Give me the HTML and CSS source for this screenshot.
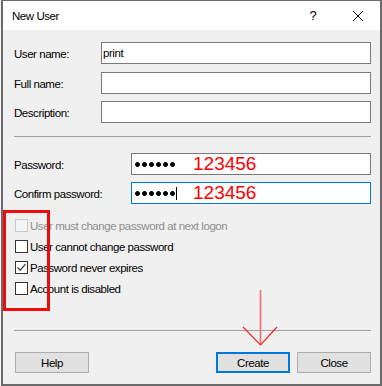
FILE: index.html
```
<!DOCTYPE html>
<html lang="en">
<head>
  <meta charset="UTF-8">
  <meta name="viewport" content="width=device-width, initial-scale=1.0">
  <title>New User</title>
  <link rel="stylesheet" href="styles.css">
</head>
<body>
  <div class="window">
    <div class="titlebar">
      <span class="title">New User</span>
      <span class="tb-btn help-btn">?</span>
      <span class="tb-btn close-btn">
        <svg width="10" height="10" viewBox="0 0 10 10"><path d="M0 0L10 10M10 0L0 10" stroke="#000" stroke-width="1"/></svg>
      </span>
    </div>

    <div class="content">
      <div class="form-grid names">
        <label>User name:</label>
        <div class="field">print</div>
        <label>Full name:</label>
        <div class="field"></div>
        <label>Description:</label>
        <div class="field"></div>
      </div>

      <div class="sep"></div>

      <div class="form-grid passwords">
        <label>Password:</label>
        <div class="field"><span class="dots"></span><span class="note">123456</span></div>
        <label>Confirm password:</label>
        <div class="field focused"><span class="dots"></span><span class="caret"></span><span class="note">123456</span></div>
      </div>

      <div class="checks">
        <div class="check disabled"><span class="box"></span>User must change password at next logon</div>
        <div class="check"><span class="box"></span>User cannot change password</div>
        <div class="check"><span class="box"><svg width="11" height="11" viewBox="0 0 11 11"><path d="M1.5 5.5L4.2 8.2L9.5 2.2" fill="none" stroke="#333" stroke-width="1.2"/></svg></span>Password never expires</div>
        <div class="check"><span class="box"></span>Account is disabled</div>
      </div>

      <div class="sep sep-bottom"></div>

      <div class="buttons">
        <button class="btn">Help</button>
        <div class="btn-group">
          <button class="btn default">Create</button>
          <button class="btn">Close</button>
        </div>
      </div>
    </div>

    <!-- annotations drawn over the dialog -->
    <div class="mark-box"></div>
    <svg class="mark-arrow" width="36" height="58" viewBox="0 0 36 58">
      <path d="M18.5 1V56" stroke="#f07070" stroke-width="1.6"/>
      <path d="M1 38L18.5 56L35 38" fill="none" stroke="#ff2020" stroke-width="1.2"/>
    </svg>
  </div>
</body>
</html>
```

FILE: styles.css
```
body {
  margin: 0;
  background-color: #f4f4f4;
  font-family: "Liberation Sans", Arial, sans-serif;
  font-size: 11.5px;
  letter-spacing: -0.45px;
  color: #000;
}

.window {
  position: relative;
  margin-left: 1px;
  width: 381px;
  height: 386px;
  box-sizing: border-box;
  border: 2px solid #6b6b6b;
  border-top-width: 1px;
  background-color: #f0f0f0;
}

.titlebar {
  display: flex;
  align-items: center;
  height: 29px;
  padding-left: 9px;
  background-color: #fff;
}

.title {
  flex: 1;
}

.tb-btn {
  display: flex;
  align-items: center;
  justify-content: center;
  width: 46px;
  height: 29px;
}

.help-btn {
  font-size: 13px;
  letter-spacing: 0;
}

.close-btn {
  width: 44px;
}

.content {
  display: flex;
  flex-direction: column;
  padding: 12px 9px 0 11px;
}

.form-grid {
  display: grid;
  align-items: center;
}

.names {
  grid-template-columns: 87px 1fr;
  row-gap: 7.5px;
}

.passwords {
  grid-template-columns: 117px 1fr;
  row-gap: 7px;
  margin-top: 16px;
}

.form-grid label {
  padding-top: 2px;
}

.field {
  position: relative;
  display: flex;
  align-items: center;
  height: 22px;
  box-sizing: border-box;
  padding-left: 1px;
  border: 1px solid #7a7a7a;
  background-color: #fff;
}

.field.focused {
  border-color: #0078d7;
}

.dots {
  width: 42px;
  height: 5px;
  margin-left: 1px;
  background: radial-gradient(circle, #000 2.1px, transparent 2.7px) 0 0 / 7px 5px repeat-x;
}

.caret {
  width: 1px;
  height: 13px;
  background-color: #000;
}

.note {
  position: absolute;
  left: 61px;
  top: 0;
  font-size: 19px;
  line-height: 19px;
  letter-spacing: 0;
  color: #f00;
}

.sep {
  height: 1px;
  margin-top: 13px;
  background-color: #a0a0a0;
}

.sep-bottom {
  margin-top: 31px;
}

.checks {
  display: flex;
  flex-direction: column;
  margin-top: 11px;
}

.check {
  display: flex;
  align-items: center;
  gap: 2px;
  height: 21px;
  padding-left: 1px;
}

.box {
  flex: none;
  display: flex;
  width: 13px;
  height: 13px;
  box-sizing: border-box;
  border: 1px solid #333;
  background-color: #fff;
}

.check.disabled {
  color: #8d8d8d;
}

.check.disabled .box {
  border-color: #cacaca;
  background-color: #f4f4f4;
}

.buttons {
  display: flex;
  justify-content: space-between;
  margin-top: 21px;
  padding-left: 1px;
}

.btn-group {
  display: flex;
  gap: 7px;
}

.btn {
  width: 74px;
  height: 21px;
  box-sizing: border-box;
  padding: 0;
  font: inherit;
  letter-spacing: inherit;
  color: #000;
  border: 1px solid #adadad;
  background-color: #e1e1e1;
}

.btn.default {
  border: 2px solid #0078d7;
}

.mark-box {
  position: absolute;
  left: 0;
  top: 209px;
  width: 47px;
  height: 101px;
  box-sizing: border-box;
  border: 3px solid #ec0c0c;
}

.mark-arrow {
  position: absolute;
  left: 239px;
  top: 288px;
}
```
